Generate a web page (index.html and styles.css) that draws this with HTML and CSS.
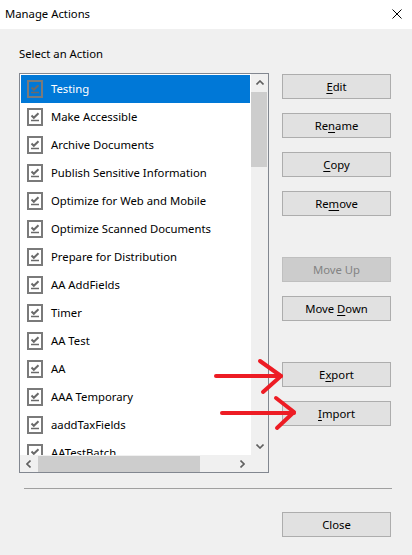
FILE: index.html
```html
<!DOCTYPE html>
<html lang="en">
<head>
    <meta charset="UTF-8">
    <meta name="viewport" content="width=device-width, initial-scale=1.0">
    <title>Manage Actions</title>
    <link rel="stylesheet" href="styles.css">
</head>
<body>
    <svg width="0" height="0" class="defs">
        <symbol id="action-icon" viewBox="0 0 16 18">
            <rect x="1" y="1" width="14" height="16" fill="none" stroke="#7a7a7a" stroke-width="2"/>
            <path d="M4.5 7.5 L6.8 9.8 L11.5 5.2" fill="none" stroke="#6a6a6a" stroke-width="2"/>
            <path d="M4 12.5 H12" stroke="#6a6a6a" stroke-width="1.5"/>
        </symbol>
    </svg>

    <div class="dialog">
        <div class="titlebar">
            <span class="title">Manage Actions</span>
            <svg class="close" width="10" height="10" viewBox="0 0 10 10">
                <path d="M0.5 0.5 L9.5 9.5 M9.5 0.5 L0.5 9.5" stroke="#000" stroke-width="1"/>
            </svg>
        </div>

        <div class="content">
            <div class="picker">
                <div class="label">Select an Action</div>
                <div class="listbox">
                    <ul class="items">
                        <li class="item selected"><svg class="icon"><use href="#action-icon"/></svg>Testing</li>
                        <li class="item"><svg class="icon"><use href="#action-icon"/></svg>Make Accessible</li>
                        <li class="item"><svg class="icon"><use href="#action-icon"/></svg>Archive Documents</li>
                        <li class="item"><svg class="icon"><use href="#action-icon"/></svg>Publish Sensitive Information</li>
                        <li class="item"><svg class="icon"><use href="#action-icon"/></svg>Optimize for Web and Mobile</li>
                        <li class="item"><svg class="icon"><use href="#action-icon"/></svg>Optimize Scanned Documents</li>
                        <li class="item"><svg class="icon"><use href="#action-icon"/></svg>Prepare for Distribution</li>
                        <li class="item"><svg class="icon"><use href="#action-icon"/></svg>AA AddFields</li>
                        <li class="item"><svg class="icon"><use href="#action-icon"/></svg>Timer</li>
                        <li class="item"><svg class="icon"><use href="#action-icon"/></svg>AA Test</li>
                        <li class="item"><svg class="icon"><use href="#action-icon"/></svg>AA</li>
                        <li class="item"><svg class="icon"><use href="#action-icon"/></svg>AAA Temporary</li>
                        <li class="item"><svg class="icon"><use href="#action-icon"/></svg>aaddTaxFields</li>
                        <li class="item"><svg class="icon"><use href="#action-icon"/></svg>AATestBatch</li>
                    </ul>
                    <div class="vscroll">
                        <span class="arrow">
                            <svg width="8" height="5" viewBox="0 0 8 5"><path d="M0.5 4.5 L4 1 L7.5 4.5" fill="none" stroke="#606060" stroke-width="1.6"/></svg>
                        </span>
                        <span class="thumb"></span>
                        <span class="spacer"></span>
                        <span class="arrow">
                            <svg width="8" height="5" viewBox="0 0 8 5"><path d="M0.5 0.5 L4 4 L7.5 0.5" fill="none" stroke="#606060" stroke-width="1.6"/></svg>
                        </span>
                    </div>
                    <div class="hscroll">
                        <span class="arrow">
                            <svg width="5" height="8" viewBox="0 0 5 8"><path d="M4.5 0.5 L1 4 L4.5 7.5" fill="none" stroke="#606060" stroke-width="1.6"/></svg>
                        </span>
                        <span class="thumb"></span>
                        <span class="spacer"></span>
                        <span class="arrow">
                            <svg width="5" height="8" viewBox="0 0 5 8"><path d="M0.5 0.5 L4 4 L0.5 7.5" fill="none" stroke="#606060" stroke-width="1.6"/></svg>
                        </span>
                    </div>
                    <div class="corner"></div>
                </div>
            </div>

            <div class="actions">
                <button class="btn"><u>E</u>dit</button>
                <button class="btn">Re<u>n</u>ame</button>
                <button class="btn"><u>C</u>opy</button>
                <button class="btn">Re<u>m</u>ove</button>
                <button class="btn group" disabled>Move Up</button>
                <button class="btn">Move <u>D</u>own</button>
                <button class="btn group">E<u>x</u>port</button>
                <button class="btn"><u>I</u>mport</button>
            </div>
        </div>

        <hr class="divider">

        <div class="footer">
            <button class="btn">Close</button>
        </div>

        <!-- hand-drawn markers pointing at Export / Import -->
        <svg class="marks" width="412" height="555" viewBox="0 0 412 555">
            <g fill="none" stroke="#ed1c24" stroke-width="4" stroke-linecap="round" stroke-linejoin="round">
                <path d="M216 376 H281"/>
                <path d="M260 361 L281 376 L263 392"/>
                <path d="M222 413 H294"/>
                <path d="M276 398 L294 412 L277 428"/>
            </g>
        </svg>
    </div>
</body>
</html>
```

FILE: styles.css
```css
body {
    margin: 0;
    padding: 0;
    font-family: "Segoe UI", "Noto Sans", sans-serif;
    font-size: 11.3px;
    color: #000;
    background-color: #f0f0f0;
}

.defs {
    position: absolute;
}

.dialog {
    position: relative;
    width: 412px;
    height: 555px;
    background-color: #f0f0f0;
    overflow: hidden;
}

.titlebar {
    height: 29px;
    background-color: #fff;
    display: flex;
    align-items: center;
    justify-content: space-between;
    padding: 0 10px 0 5px;
    box-sizing: border-box;
}

.title {
    line-height: 16px;
    margin-top: -1px;
}

.close {
    display: block;
    margin-top: -1px;
}

.content {
    display: flex;
    padding: 17px 0 0 19px;
}

.picker {
    width: 250px;
}

.label {
    line-height: 16px;
    height: 16px;
}

.listbox {
    margin-top: 11px;
    width: 250px;
    height: 400px;
    box-sizing: border-box;
    border: 1px solid #828790;
    background-color: #fff;
    display: grid;
    grid-template-columns: 1fr 17px;
    grid-template-rows: 1fr 17px;
}

.items {
    list-style: none;
    margin: 0;
    padding: 1px;
    overflow: hidden;
}

.item {
    height: 28px;
    display: flex;
    align-items: center;
    padding-left: 6px;
    gap: 8px;
    white-space: nowrap;
    line-height: 16px;
}

.item.selected {
    background-color: #0078d7;
    color: #fff;
}

.icon {
    width: 16px;
    height: 18px;
    flex: none;
}

.vscroll {
    background-color: #f0f0f0;
    display: flex;
    flex-direction: column;
}

.vscroll .arrow {
    height: 17px;
    display: flex;
    align-items: center;
    justify-content: center;
}

.vscroll .thumb {
    height: 75px;
    margin: 1px 1px 0 0;
    background-color: #cdcdcd;
}

.spacer {
    flex: 1;
}

.hscroll {
    background-color: #f0f0f0;
    display: flex;
}

.hscroll .arrow {
    width: 17px;
    display: flex;
    align-items: center;
    justify-content: center;
}

.hscroll .thumb {
    width: 162px;
    margin: 1px 0 0 1px;
    background-color: #cdcdcd;
}

.corner {
    background-color: #f0f0f0;
}

.actions {
    margin-left: 13px;
    padding-top: 28px;
    display: flex;
    flex-direction: column;
    gap: 14px;
}

.btn {
    width: 109px;
    height: 25px;
    box-sizing: border-box;
    border: 1px solid #adadad;
    background-color: #e1e1e1;
    font-family: inherit;
    font-size: 11.3px;
    line-height: 16px;
    color: #000;
    padding: 1px 0 0;
}

.btn u {
    text-underline-offset: 2px;
}

.btn.group {
    margin-top: 27px;
}

.btn:disabled {
    background-color: #cccccc;
    border-color: #bfbfbf;
    color: #838383;
}

.divider {
    margin: 15px 0 0 24px;
    width: 368px;
    border: none;
    border-top: 1px solid #a0a0a0;
    height: 0;
}

.footer {
    display: flex;
    justify-content: flex-end;
    padding: 23px 21px 0 0;
}

.marks {
    position: absolute;
    left: 0;
    top: 0;
    pointer-events: none;
}
```
